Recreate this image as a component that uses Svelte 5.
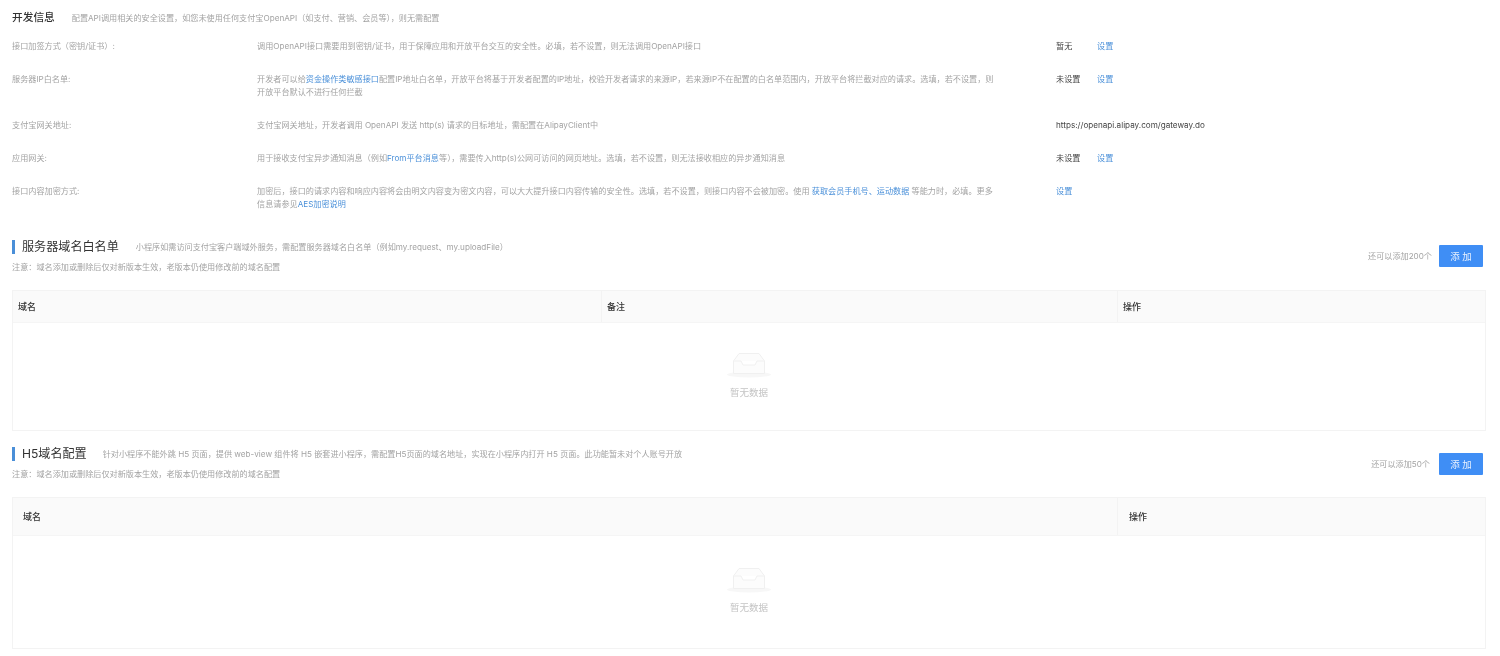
<script>
  const rows = [
    { label: '接口加签方式（密钥/证书）:', value: '暂无', link: true,
      lines: [[['调用OpenAPI接口需要用到密钥/证书，用于保障应用和开放平台交互的安全性。必填，若不设置，则无法调用OpenAPI接口', 0]]] },
    { label: '服务器IP白名单:', value: '未设置', link: true,
      lines: [[['开发者可以给', 0], ['资金操作类敏感接口', 1], ['配置IP地址白名单，开放平台将基于开发者配置的IP地址，校验开发者请求的来源IP，若来源IP不在配置的白名单范围内，开放平台将拦截对应的请求。选填，若不设置，则', 0]], [['开放平台默认不进行任何拦截', 0]]] },
    { label: '支付宝网关地址:', value: 'https://openapi.alipay.com/gateway.do', link: false,
      lines: [[['支付宝网关地址，开发者调用 OpenAPI 发送 http(s) 请求的目标地址，需配置在AlipayClient中', 0]]] },
    { label: '应用网关:', value: '未设置', link: true,
      lines: [[['用于接收支付宝异步通知消息（例如', 0], ['From平台消息', 1], ['等），需要传入http(s)公网可访问的网页地址。选填，若不设置，则无法接收相应的异步通知消息', 0]]] },
    { label: '接口内容加密方式:', value: '', link: true,
      lines: [[['加密后，接口的请求内容和响应内容将会由明文内容变为密文内容，可以大大提升接口内容传输的安全性。选填，若不设置，则接口内容不会被加密。使用 ', 0], ['获取会员手机号、运动数据', 1], [' 等能力时，必填。更多', 0]], [['信息请参见', 0], ['AES加密说明', 1]]] }
  ];
</script>

{#snippet inbox()}
  <svg class="inbox" width="44" height="25" viewBox="0 0 44 25" aria-hidden="true">
    <ellipse cx="22" cy="21.5" rx="22" ry="3" fill="#f7f7f7" />
    <path d="M12 .5 L32 .5 L37.5 8 L37.5 20.5 L6.5 20.5 L6.5 8 Z" fill="#fcfcfc" stroke="#f0f0f0" stroke-width="1" />
    <path d="M6.5 8 L14 8 L16 12 L28 12 L30 8 L37.5 8" fill="#ffffff" stroke="#f0f0f0" stroke-width="1" />
  </svg>
{/snippet}

<div class="page">
  <header class="head">
    <h2>开发信息</h2>
    <p class="muted">配置API调用相关的安全设置，如您未使用任何支付宝OpenAPI（如支付、营销、会员等），则无需配置</p>
  </header>

  <div class="rows">
    {#each rows as row}
      <div class="row">
        <div class="label">{row.label}</div>
        <div class="desc">
          {#each row.lines as line}
            <div>{#each line as part}{#if part[1]}<a href="#top">{part[0]}</a>{:else}{part[0]}{/if}{/each}</div>
          {/each}
        </div>
        <div class="value">
          {#if row.value}<span class="val">{row.value}</span>{/if}
          {#if row.link}<a href="#top">设置</a>{/if}
        </div>
      </div>
    {/each}
  </div>

  <section class="sec first">
    <div class="sec-head">
      <div>
        <div class="sec-title">
          <h3>服务器域名白名单</h3>
          <p class="muted wide">小程序如需访问支付宝客户端域外服务，需配置服务器域名白名单（例如my.request、my.uploadFile）</p>
        </div>
        <p class="note">注意：域名添加或删除后仅对新版本生效，老版本仍使用修改前的域名配置</p>
      </div>
      <div class="actions a1">
        <span>还可以添加200个</span>
        <button>添 加</button>
      </div>
    </div>
    <div class="table">
      <div class="thead three">
        <div>域名</div><div>备注</div><div>操作</div>
      </div>
      <div class="empty e1">
        {@render inbox()}
        <span>暂无数据</span>
      </div>
    </div>
  </section>

  <section class="sec second">
    <div class="sec-head">
      <div>
        <div class="sec-title">
          <h3>H5域名配置</h3>
          <p class="muted narrow">针对小程序不能外跳 H5 页面，提供 web-view 组件将 H5 嵌套进小程序，需配置H5页面的域名地址，实现在小程序内打开 H5 页面。此功能暂未对个人账号开放</p>
        </div>
        <p class="note">注意：域名添加或删除后仅对新版本生效，老版本仍使用修改前的域名配置</p>
      </div>
      <div class="actions a2">
        <span>还可以添加50个</span>
        <button>添 加</button>
      </div>
    </div>
    <div class="table t2">
      <div class="thead two">
        <div>域名</div><div>操作</div>
      </div>
      <div class="empty e2">
        {@render inbox()}
        <span>暂无数据</span>
      </div>
    </div>
  </section>
</div>

<style>
  :global(body) {
    margin: 0;
    background: #fff;
  }
  .page {
    width: 1500px;
    height: 656px;
    overflow: hidden;
    box-sizing: border-box;
    padding: 10px 14px 0 12px;
    font-family: Inter, "Noto Sans CJK SC", sans-serif;
    font-size: 8.15px;
    line-height: 13px;
    color: #a3a3a3;
    filter: blur(0.3px);
  }
  h2, h3, p { margin: 0; font-weight: 400; }
  a { color: #4a90d9; text-decoration: none; }
  .head {
    display: flex;
    align-items: center;
    gap: 17px;
    height: 16px;
  }
  h2 { font-size: 10.7px; font-weight: 500; color: #333; line-height: 16px; }
  .rows {
    margin-top: 14px;
    display: flex;
    flex-direction: column;
    gap: 20px;
  }
  .row {
    display: grid;
    grid-template-columns: 245px 799px 1fr;
  }
  .desc { width: 745px; white-space: nowrap; }
  .value { display: flex; color: #444; }
  .val { min-width: 41px; }
  .first { margin-top: 29px; }
  .sec-head {
    display: flex;
    justify-content: space-between;
    align-items: flex-start;
    padding-right: 3px;
  }
  .sec-title {
    display: flex;
    align-items: center;
    height: 14px;
    border-left: 3px solid #4a8fd8;
    padding-left: 7px;
  }
  h3 { font-size: 12.1px; color: #333; line-height: 14px; }
  .wide { margin-left: 17px; }
  .narrow { margin-left: 16px; }
  .note { margin-top: 7px; }
  .actions { display: flex; align-items: center; gap: 7px; margin-top: 6px; }
  .a1 { margin-top: 5px; }
  .a2 { gap: 9px; }
  button {
    width: 44px;
    height: 22px;
    padding: 0;
    border: 0;
    border-radius: 1px;
    background: #3f8ef5;
    color: #e8f1fe;
    font: inherit;
    font-size: 9.5px;
  }
  .table {
    margin-top: 16px;
    width: 1474px;
    box-sizing: border-box;
    border: 1px solid #f3f3f3;
    color: #333;
  }
  .thead {
    display: grid;
    background: #fafafa;
    border-bottom: 1px solid #f5f5f5;
    font-weight: 500;
    font-size: 9px;
  }
  .thead > div { padding: 9px 5px; border-left: 1px solid #f3f3f3; }
  .thead > div:first-child { border-left: 0; }
  .three { grid-template-columns: 588px 516px 1fr; }
  .two { grid-template-columns: 1104px 1fr; }
  .t2 .thead > div { padding: 12px 11px; }
  .t2 .thead > div:first-child { padding-left: 10px; }
  .empty {
    display: flex;
    flex-direction: column;
    align-items: center;
    color: #c4c4c4;
    font-size: 9.5px;
    gap: 8px;
    box-sizing: border-box;
  }
  .e1 { height: 107px; padding-top: 30px; }
  .e2 { height: 112px; padding-top: 32px; }
  .second { margin-top: 16px; }
</style>
